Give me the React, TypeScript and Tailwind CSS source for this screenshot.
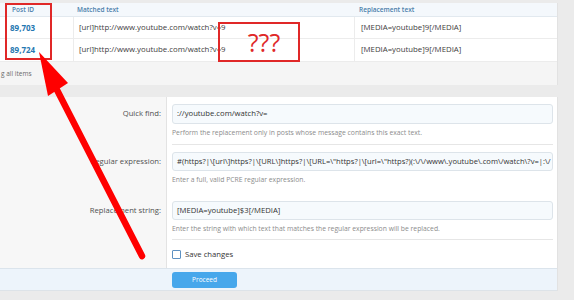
import React from "react";

const regex =
  '#(https?|\\[url\\]https?|\\[URL\\]https?|\\[URL=\\"https?|\\[url=\\"https?)(:\\/\\/www\\.youtube\\.com\\/watch\\?v=|:\\/';

function Row({ id, matched, repl, h }: { id: string; matched: string; repl: string; h: string }) {
  return (
    <div className={`grid grid-cols-[73px_281px_1fr] border-b border-[#ececec] text-[7.8px] text-[#3d3d3d] ${h}`}>
      <div className="pl-[10px] text-[8px] font-bold text-[#2577b1] flex items-center">{id}</div>
      <div className="pl-[5px] border-l border-[#ececec] flex items-center whitespace-nowrap">{matched}</div>
      <div className="pl-[6px] border-l border-[#ececec] flex items-center whitespace-nowrap">{repl}</div>
    </div>
  );
}

export default function App() {
  return (
    <div className="relative w-[574px] h-[300px] overflow-hidden bg-[#ebebeb] font-['Open_Sans',sans-serif]">
      <div className="pt-[3px]">
        {/* results table */}
        <div className="w-[558px] bg-white border-r border-[#e2e2e2]">
          <div className="grid grid-cols-[73px_281px_1fr] h-[14px] bg-[#f4f8fc] border-b border-[#e2e9ef] items-center text-[6.5px] font-semibold text-[#4a7eab]">
            <div className="pl-[12px]">Post ID</div>
            <div className="pl-[4px]">Matched text</div>
            <div className="pl-[5px]">Replacement text</div>
          </div>
          <Row h="h-[22px]" id="89,703" matched="[url]http://www.youtube.com/watch?v=9" repl="[MEDIA=youtube]9[/MEDIA]" />
          <Row h="h-[23px]" id="89,724" matched="[url]http://www.youtube.com/watch?v=9" repl="[MEDIA=youtube]9[/MEDIA]" />
          <div className="h-[23px] bg-[#f5f5f5] flex items-center text-[6.5px] text-[#6a6a6a] pt-[1px]">
            <span className="pl-[1px]">g all items</span>
          </div>
        </div>

        <div className="h-[12px]" />

        {/* form */}
        <div className="w-[558px] bg-white border-r border-[#e2e2e2]">
          {/* Quick find */}
          <div className="flex">
            <div className="w-[167px] shrink-0 bg-[#f7f7f7] border-r border-[#e3e3e3] pt-[7px] pr-[5px]">
              <div className="h-[20px] flex items-center justify-end text-[7.7px] text-[#505050]">Quick find:</div>
            </div>
            <div className="w-[381px] ml-[5px] pt-[7px]">
              <div className="h-[20px] rounded-[3px] border border-[#dde4ea] bg-[#f6fafd] flex items-center pl-[4px] text-[7.7px] text-[#333]">
                ://youtube.com/watch?v=
              </div>
              <div className="mt-[3px] h-[12px] flex items-center text-[6.8px] text-[#8c8c8c] whitespace-nowrap">
                Perform the replacement only in posts whose message contains this exact text.
              </div>
              <div className="h-[6px] border-b border-[#e6e6e6]" />
            </div>
          </div>
          {/* Regular expression */}
          <div className="flex">
            <div className="w-[167px] shrink-0 bg-[#f7f7f7] border-r border-[#e3e3e3] pt-[7px] pr-[5px]">
              <div className="h-[19px] flex items-center justify-end text-[7.7px] text-[#505050] whitespace-nowrap">Regular expression:</div>
            </div>
            <div className="w-[381px] ml-[5px] pt-[7px] pb-[8px]">
              <div className="w-[381px] h-[19px] rounded-[3px] border border-[#dde4ea] bg-[#f6fafd] overflow-hidden">
                <div className="pl-[4px] h-[17px] leading-[17px] text-[7.6px] text-[#333] whitespace-nowrap">{regex}</div>
              </div>
              <div className="mt-[3px] h-[12px] flex items-center text-[6.8px] text-[#8c8c8c]">
                Enter a full, valid PCRE regular expression.
              </div>
            </div>
          </div>
          {/* Replacement string */}
          <div className="flex">
            <div className="w-[167px] shrink-0 bg-[#f7f7f7] border-r border-[#e3e3e3] pt-[7px] pr-[5px]">
              <div className="h-[19px] flex items-center justify-end text-[7.7px] text-[#505050]">Replacement string:</div>
            </div>
            <div className="w-[381px] ml-[5px] pt-[7px]">
              <div className="h-[19px] rounded-[3px] border border-[#dde4ea] bg-[#f6fafd] flex items-center pl-[4px] text-[7.7px] text-[#333]">
                [MEDIA=youtube]$3[/MEDIA]
              </div>
              <div className="mt-[3px] h-[12px] flex items-center text-[6.8px] text-[#8c8c8c] whitespace-nowrap">
                Enter the string with which text that matches the regular expression will be replaced.
              </div>
              <div className="h-[5px] border-b border-[#e6e6e6]" />
            </div>
          </div>
          {/* Save changes */}
          <div className="flex h-[28px]">
            <div className="w-[167px] shrink-0 bg-[#f7f7f7] border-r border-[#e3e3e3]" />
            <div className="flex-1 px-[5px] flex items-center gap-[4px] pt-[1px]">
              <div className="w-[9px] h-[9px] border border-[#5d91c2] rounded-[1px] bg-white" />
              <span className="text-[7.7px] text-[#333]">Save changes</span>
            </div>
          </div>
          {/* footer */}
          <div className="h-[23px] bg-[#edf4fb] border-t border-[#dbe4ec] border-b border-b-[#dde3e8] pt-[3px] pl-[172px]">
            <div className="w-[65px] h-[16px] rounded-[3px] bg-[#47a7eb] flex items-center justify-center text-[6.5px] text-white">
              Proceed
            </div>
          </div>
        </div>
      </div>

      {/* annotations */}
      <div className="absolute left-[5px] top-[3px] w-[47px] h-[57px] border-2 border-[#e02828]" />
      <div className="absolute left-[218px] top-[22px] w-[82px] h-[40px] border-2 border-[#e02828] flex items-center justify-center">
        <span className="pl-[10px] text-[25px] leading-none text-[#e02828] font-['Open_Sans',sans-serif]">???</span>
      </div>
      <svg className="absolute left-0 top-0 pointer-events-none" width="574" height="300" viewBox="0 0 574 300">
        <line x1="142" y1="256" x2="56" y2="88" stroke="#ff0000" strokeWidth="6.5" strokeLinecap="round" />
        <polygon points="39,52 48,96 68,83" fill="#ff0000" />
      </svg>
    </div>
  );
}
